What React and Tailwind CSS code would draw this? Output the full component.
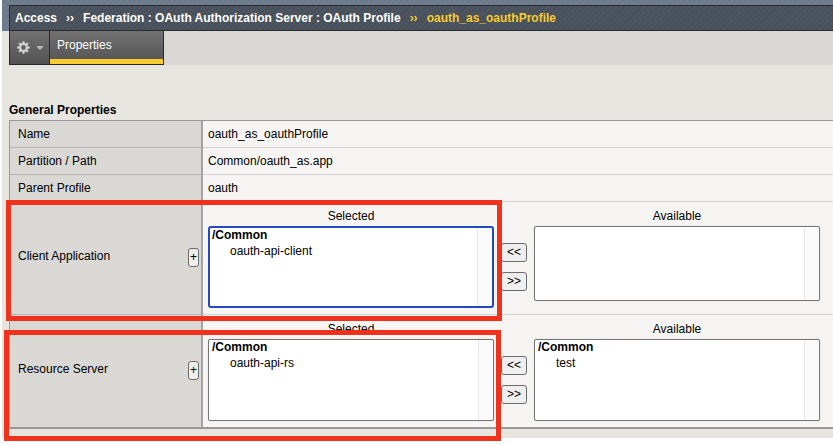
import React from 'react';

const HATCH =
  'bg-[repeating-linear-gradient(135deg,rgba(255,255,255,0.03)_0px,rgba(255,255,255,0.03)_2px,transparent_2px,transparent_4px)]';

function GearIcon() {
  const teeth = [0, 45, 90, 135, 180, 225, 270, 315];
  return (
    <svg width="13" height="13" viewBox="0 0 13 13" aria-hidden="true">
      {teeth.map((angle) => (
        <path
          key={angle}
          d="M5.3 3 L5.5 0.3 H7.5 L7.7 3 Z"
          fill="#d6d6d6"
          transform={`rotate(${angle} 6.5 6.5)`}
        />
      ))}
      <circle cx="6.5" cy="6.5" r="3.4" fill="none" stroke="#d6d6d6" strokeWidth="2" />
    </svg>
  );
}

const LABEL_CELL = 'w-[193px] border-r-2 border-[#a3a3a3] bg-[#d9d8d4] pl-2 text-left font-normal';

function PropertyRow({ label, children }) {
  return (
    <tr className="h-[27px]">
      <th scope="row" className={LABEL_CELL}>
        {label}
      </th>
      <td className="bg-[#f6f5f3] pl-[5px]">{children}</td>
    </tr>
  );
}

function ListBox({ id, title, options, active, short }) {
  const frame = active
    ? 'border-2 border-[#2448bd] rounded-[3px]'
    : 'border border-[#767676] rounded-[2px] shadow-[0_0_1px_#76767680] pl-px';
  const height = short ? 'h-[75px]' : 'h-[82px]';
  return (
    <div className="flex w-[286px] flex-col">
      <label htmlFor={id} className="h-[17px] text-center leading-[15px]">
        {title}
      </label>
      <select
        id={id}
        multiple
        className={`${frame} ${height} block w-full appearance-none overflow-hidden bg-white bg-[linear-gradient(to_right,#e8e8e8_1px,#fafafa_1px)] bg-[length:15px_100%] bg-right bg-no-repeat text-[12px] outline-none`}
      >
        {options.length > 0 && (
          <optgroup label="/Common" className="px-0 text-[12px] leading-4 font-bold">
            {options.map((name) => (
              <option key={name} className="min-h-[18px] py-px pr-0 pl-5 leading-4 font-normal">
                {name}
              </option>
            ))}
          </optgroup>
        )}
      </select>
    </div>
  );
}

const BUTTON = 'rounded-[3px] border border-[#6b6b6b] bg-[#efefef] text-center leading-[17px] text-black';

function TransferRow({ id, label, selected, available, active }) {
  return (
    <tr>
      <th scope="row" className={`${LABEL_CELL} pr-0.5 pb-1`}>
        <div className="flex items-center justify-between">
          {label}
          <button type="button" aria-label={`Add ${label}`} className={`${BUTTON} mt-0.5 h-[19px] w-[11px]`}>
            +
          </button>
        </div>
      </th>
      <td className="bg-[#f6f5f3] pt-[7px] pb-[6px] pl-[5px]">
        <div className="flex gap-[7px]">
          <ListBox id={`${id}-selected`} title="Selected" options={selected} active={active} />
          <div className="flex w-[26px] flex-col gap-[10px] pt-[34px]">
            <button type="button" className={`${BUTTON} h-[19px]`}>
              &lt;&lt;
            </button>
            <button type="button" className={`${BUTTON} h-[19px]`}>
              &gt;&gt;
            </button>
          </div>
          <ListBox id={`${id}-available`} title="Available" options={available} short={available.length === 0} />
        </div>
      </td>
    </tr>
  );
}

export default function App() {
  return (
    <div className="min-h-screen bg-white pb-[7px] pl-0.5 font-['Liberation_Sans',Arial,sans-serif] text-[12px] text-black">
      <div className="bg-[#e6e5e0] pb-[9px]">
        <header className={`bg-[#6b7a8b] pt-[5px] pl-[7px] ${HATCH}`}>
          <nav
            aria-label="Breadcrumb"
            className={`flex h-[26px] items-center gap-[9px] border-y border-l border-[#28292c] bg-[#47505b] pl-[5px] font-bold whitespace-nowrap text-white ${HATCH}`}
          >
            <a href="#access">Access</a>
            <span>››</span>
            <a href="#profile">Federation : OAuth Authorization Server : OAuth Profile</a>
            <span className="text-[#f8cb2e]">››</span>
            <span className="text-[#f8cb2e]">oauth_as_oauthProfile</span>
          </nav>
        </header>

        <div className="ml-[7px] flex h-[34px] bg-[#d9d8d4]">
          <button
            type="button"
            aria-label="Options"
            className="flex w-[41px] items-center gap-[6px] border-x border-b border-[#28292c] bg-linear-to-b from-[#717171] to-[#535353] pl-[7px]"
          >
            <GearIcon />
            <svg width="8" height="4" viewBox="0 0 8 4" aria-hidden="true">
              <path d="M0 0 H8 L4 4 Z" fill="#b5b5b5" />
            </svg>
          </button>
          <a
            href="#properties"
            className="w-[114px] border-r border-b border-[#28292c] bg-linear-to-b from-[#717171] to-[#535353] text-white"
          >
            <span className="block h-7 pl-[7px] leading-7">Properties</span>
            <span className="block h-[5px] bg-[#f8cb2e]" />
          </a>
        </div>

        <main className="relative ml-[7px]">
          <h2 className="pt-[37px] pb-[2px] leading-4 font-bold">General Properties</h2>
          <table className="w-full table-fixed border-separate border-spacing-0 border-t border-b-2 border-l border-[#999999] [&_td]:border-b-[#d4d3d1] [&_tr:not(:last-child)_td]:border-b [&_tr:not(:last-child)_th]:border-b [&_tr:not(:last-child)_th]:border-b-[#b5b5b3]">
            <tbody>
              <PropertyRow label="Name">oauth_as_oauthProfile</PropertyRow>
              <PropertyRow label="Partition / Path">Common/oauth_as.app</PropertyRow>
              <PropertyRow label="Parent Profile">oauth</PropertyRow>
              <TransferRow id="client" label="Client Application" selected={['oauth-api-client']} available={[]} active />
              <TransferRow id="resource" label="Resource Server" selected={['oauth-api-rs']} available={['test']} />
            </tbody>
          </table>
          <div className="pointer-events-none absolute top-[135px] -left-[3px] h-[121px] w-[496px] border-5 border-[#f0321c]" />
          <div className="pointer-events-none absolute top-[265px] -left-[5px] h-[111px] w-[497px] border-5 border-[#f0321c]" />
        </main>
      </div>
    </div>
  );
}
